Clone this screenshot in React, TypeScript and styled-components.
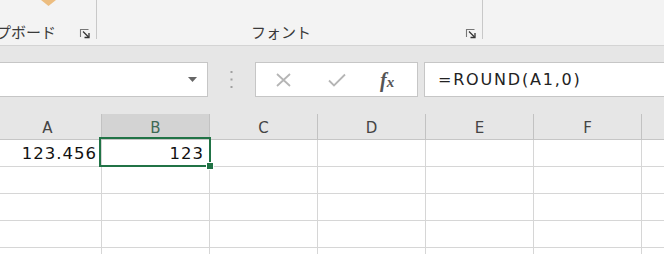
import React from "react";
import styled, { createGlobalStyle } from "styled-components";

const GlobalStyle = createGlobalStyle`
  html, body { margin: 0; padding: 0; }
  body { background: #e6e6e6; overflow: hidden; width: 664px; height: 254px; }
  #root { width: 664px; height: 254px; overflow: hidden; }
`;

const Page = styled.div`
  width: 664px;
  height: 254px;
  overflow: hidden;
  display: flex;
  flex-direction: column;
  background: #e6e6e6;
`;

const Ribbon = styled.div`
  height: 45px;
  flex: none;
  background: #f3f3f3;
  border-bottom: 1px solid #d4d4d4;
  display: flex;
  align-items: stretch;
`;

const Group = styled.div<{ $width?: number }>`
  ${(p) => (p.$width ? `width: ${p.$width}px; flex: none;` : "flex: 1;")}
  display: flex;
  flex-direction: column;
  justify-content: space-between;
  padding-bottom: 5px;
  box-sizing: border-box;
  overflow: hidden;
`;

const GroupTop = styled.div<{ $indent: number }>`
  height: 6px;
  padding-left: ${(p) => p.$indent}px;
  display: flex;
  align-items: flex-start;
`;

const GroupFooter = styled.div<{ $align: "end" | "start" }>`
  height: 16px;
  display: flex;
  align-items: center;
  justify-content: ${(p) => (p.$align === "end" ? "flex-end" : "flex-start")};
  padding-right: 5px;
  white-space: nowrap;
`;

const GroupLabel = styled.span<{ $indent?: number; $gap?: number }>`
  font-family: "Noto Sans CJK JP", "Noto Sans", sans-serif;
  font-size: 15px;
  line-height: 16px;
  color: #3a3a3a;
  padding-left: ${(p) => p.$indent ?? 0}px;
  margin-right: ${(p) => p.$gap ?? 0}px;
  flex: none;
`;

const Launcher = styled.svg`
  width: 12px;
  height: 11px;
  flex: none;
  margin-left: auto;
  margin-top: 2px;
`;

const Divider = styled.div`
  width: 1px;
  height: 39px;
  flex: none;
  background: #c8c8c8;
`;

const FormulaRow = styled.div`
  margin-top: 16px;
  height: 35px;
  flex: none;
  display: flex;
  align-items: stretch;
`;

const NameBox = styled.div`
  width: 210px;
  margin-left: -2px;
  flex: none;
  box-sizing: border-box;
  background: #fff;
  border: 1px solid #c6c6c6;
  display: flex;
  align-items: center;
  justify-content: flex-end;
  padding-right: 10px;
`;

const Grip = styled.div`
  width: 47px;
  flex: none;
  display: flex;
  align-items: center;
  justify-content: center;
`;

const FormulaButtons = styled.div`
  width: 163px;
  flex: none;
  box-sizing: border-box;
  background: #fff;
  border: 1px solid #c6c6c6;
  display: flex;
  align-items: center;
  padding-left: 19px;
`;

const IconSvg = styled.svg<{ $gap: number }>`
  flex: none;
  margin-right: ${(p) => p.$gap}px;
`;

const Fx = styled.span`
  font-family: "Liberation Serif", "DejaVu Serif", serif;
  font-style: italic;
  font-weight: bold;
  color: #555;
  display: flex;
  align-items: baseline;
  line-height: 1;
`;

const FxF = styled.span`
  font-size: 20px;
`;

const FxX = styled.span`
  font-size: 15px;
`;

const FormulaInput = styled.div`
  flex: 1;
  margin-left: 6px;
  margin-right: -2px;
  box-sizing: border-box;
  background: #fff;
  border: 1px solid #c6c6c6;
  display: flex;
  align-items: center;
  padding-left: 13px;
  font-family: "DejaVu Sans", sans-serif;
  font-size: 16px;
  letter-spacing: 1.8px;
  color: #222;
  white-space: nowrap;
`;

const Sheet = styled.div`
  margin-top: 17px;
  margin-left: -6px;
  display: grid;
  grid-template-columns: repeat(6, 108px) 34px;
  grid-template-rows: 26px;
  grid-auto-rows: 27px;
`;

const ColHeader = styled.div<{ $selected?: boolean }>`
  box-sizing: border-box;
  background: ${(p) => (p.$selected ? "#d3d3d3" : "#e6e6e6")};
  border-right: 1px solid #c2c2c2;
  border-bottom: 1px solid #c6c6c6;
  display: flex;
  align-items: center;
  justify-content: center;
  font-family: "DejaVu Sans", sans-serif;
  font-size: 15px;
  color: ${(p) => (p.$selected ? "#3e6a55" : "#444")};
  padding-top: 2px;
`;

const Cell = styled.div<{ $pad?: number }>`
  position: relative;
  box-sizing: border-box;
  background: #fff;
  border-right: 1px solid #d6d6d6;
  border-bottom: 1px solid #d6d6d6;
  display: flex;
  align-items: center;
  justify-content: flex-end;
  padding-right: ${(p) => p.$pad ?? 4}px;
  font-family: "DejaVu Sans", sans-serif;
  font-size: 16.5px;
  letter-spacing: 1px;
  color: #111;
  white-space: nowrap;
  padding-top: 1px;
`;

const SelectionFrame = styled.span`
  position: absolute;
  left: -3px;
  top: -3px;
  right: -2px;
  bottom: -1px;
  border: 2px solid #217346;
  pointer-events: none;
  z-index: 2;
`;

const FillHandle = styled.span`
  position: absolute;
  right: -5px;
  bottom: -5px;
  width: 6px;
  height: 6px;
  background: #217346;
  border: 1px solid #fff;
`;

const LauncherIcon = () => (
  <Launcher viewBox="0 0 12 11">
    <path d="M1.5 9 V1.5 H9.5" fill="none" stroke="#777" strokeWidth="1.1" />
    <path d="M4 3.5 L9.5 9" fill="none" stroke="#333" strokeWidth="1.3" />
    <path d="M10 5 V9.5 H5.5" fill="none" stroke="#333" strokeWidth="1.3" />
  </Launcher>
);

const columns = ["A", "B", "C", "D", "E", "F", "G"];

export default function App() {
  const rows = 5;
  return (
    <>
      <GlobalStyle />
      <Page>
        <Ribbon>
          <Group $width={96}>
            <GroupTop $indent={41}>
              <svg width="15" height="6" viewBox="0 0 15 6">
                <polygon points="0,0 15,0 7.5,6" fill="#ecbd80" />
              </svg>
            </GroupTop>
            <GroupFooter $align="end">
              <GroupLabel $gap={23}>クリップボード</GroupLabel>
              <LauncherIcon />
            </GroupFooter>
          </Group>
          <Divider />
          <Group $width={385}>
            <GroupTop $indent={0} />
            <GroupFooter $align="start">
              <GroupLabel $indent={154}>フォント</GroupLabel>
              <LauncherIcon />
            </GroupFooter>
          </Group>
          <Divider />
          <Group />
        </Ribbon>

        <FormulaRow>
          <NameBox>
            <svg width="9" height="5" viewBox="0 0 9 5">
              <polygon points="0,0 9,0 4.5,5" fill="#666" />
            </svg>
          </NameBox>
          <Grip>
            <svg width="3" height="18" viewBox="0 0 3 18">
              <rect x="0.5" y="0" width="2" height="2" fill="#a0a0a0" />
              <rect x="0.5" y="7.5" width="2" height="2" fill="#a0a0a0" />
              <rect x="0.5" y="15" width="2" height="2" fill="#a0a0a0" />
            </svg>
          </Grip>
          <FormulaButtons>
            <IconSvg $gap={35} width="17" height="14" viewBox="0 0 17 14">
              <path d="M2 1 L15 13 M15 1 L2 13" stroke="#b5b5b5" strokeWidth="1.8" fill="none" />
            </IconSvg>
            <IconSvg $gap={33} width="20" height="14" viewBox="0 0 20 14">
              <path d="M2 7.5 L7 12.5 L18 1.5" stroke="#b5b5b5" strokeWidth="1.8" fill="none" />
            </IconSvg>
            <Fx>
              <FxF>f</FxF>
              <FxX>x</FxX>
            </Fx>
          </FormulaButtons>
          <FormulaInput>=ROUND(A1,0)</FormulaInput>
        </FormulaRow>

        <Sheet>
          {columns.map((c) => (
            <ColHeader key={c} $selected={c === "B"}>
              {c === "G" ? "" : c}
            </ColHeader>
          ))}
          {Array.from({ length: rows }).map((_, r) =>
            columns.map((c) => {
              if (r === 0 && c === "A") {
                return (
                  <Cell key={c + r} $pad={4}>
                    123.456
                  </Cell>
                );
              }
              if (r === 0 && c === "B") {
                return (
                  <Cell key={c + r} $pad={5}>
                    123
                    <SelectionFrame>
                      <FillHandle />
                    </SelectionFrame>
                  </Cell>
                );
              }
              return <Cell key={c + r} />;
            })
          )}
        </Sheet>
      </Page>
    </>
  );
}
